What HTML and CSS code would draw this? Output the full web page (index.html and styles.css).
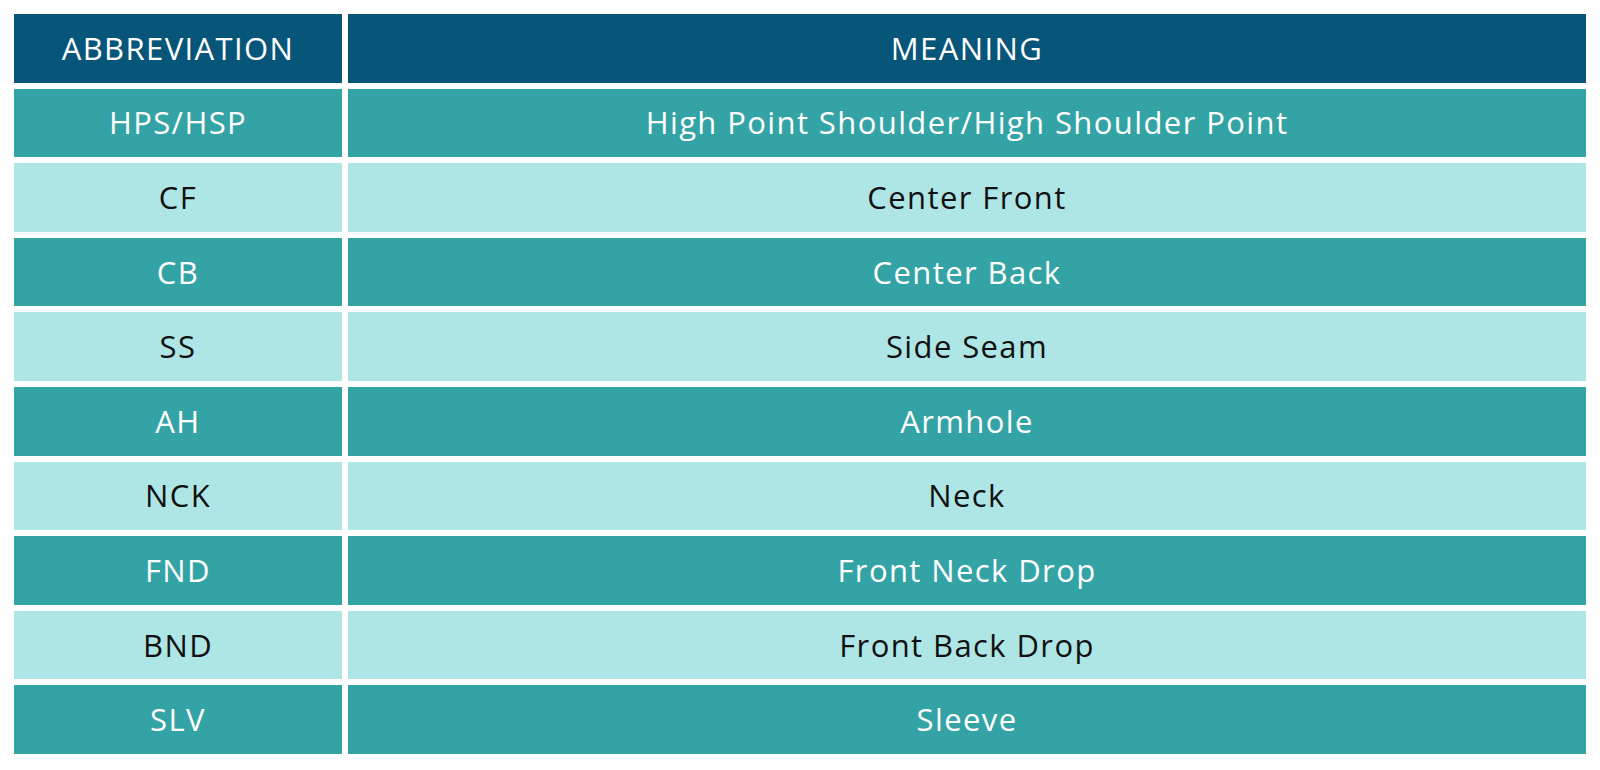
FILE: index.html
```html
<!DOCTYPE html>
<html lang="en">
<head>
<meta charset="utf-8">
<title>Abbreviations</title>
<link rel="stylesheet" href="styles.css">
</head>
<body>
<div class="table">
  <div class="cell head">ABBREVIATION</div><div class="cell head">MEANING</div>
  <div class="cell dark">HPS/HSP</div><div class="cell dark">High Point Shoulder/High Shoulder Point</div>
  <div class="cell light">CF</div><div class="cell light">Center Front</div>
  <div class="cell dark">CB</div><div class="cell dark">Center Back</div>
  <div class="cell light">SS</div><div class="cell light">Side Seam</div>
  <div class="cell dark">AH</div><div class="cell dark">Armhole</div>
  <div class="cell light">NCK</div><div class="cell light">Neck</div>
  <div class="cell dark">FND</div><div class="cell dark">Front Neck Drop</div>
  <div class="cell light">BND</div><div class="cell light">Front Back Drop</div>
  <div class="cell dark">SLV</div><div class="cell dark">Sleeve</div>
</div>
</body>
</html>
```
FILE: styles.css
```css
html, body {
  margin: 0;
  padding: 0;
  background: #ffffff;
}
body {
  padding: 14px 0 0 14px;
  font-family: "Open Sans", "DejaVu Sans", sans-serif;
}
.table {
  display: grid;
  grid-template-columns: 328px 1238px;
  grid-auto-rows: 68.6px;
  gap: 6px;
}
.cell {
  display: flex;
  align-items: center;
  justify-content: center;
  font-size: 31px;
  letter-spacing: 1.4px;
  line-height: 1;
}
.head {
  background: #075579;
  color: #ffffff;
}
.dark {
  background: #33a3a5;
  color: #ffffff;
}
.light {
  background: #aee6e6;
  color: #111111;
}
```
